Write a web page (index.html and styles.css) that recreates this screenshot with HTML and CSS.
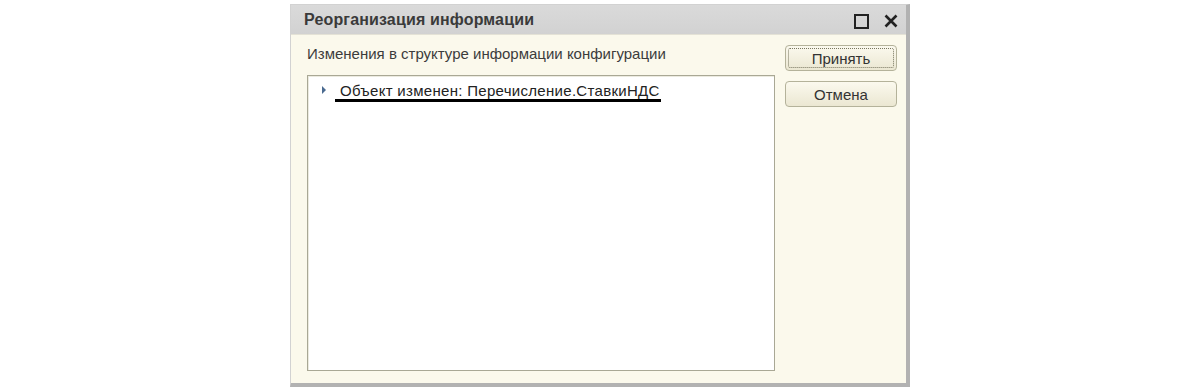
FILE: index.html
```html
<!DOCTYPE html>
<html lang="ru">
<head>
    <meta charset="UTF-8">
    <title>Реорганизация информации</title>
    <link rel="stylesheet" href="styles.css">
</head>
<body>

    <!-- Dialog window -->
    <div class="window">
        <div class="titlebar">
            <span class="title">Реорганизация информации</span>
            <div class="title-buttons">
                <svg width="15" height="15" viewBox="0 0 15 15">
                    <rect x="1" y="1" width="13" height="13" fill="none" stroke="#222" stroke-width="2"/>
                </svg>
                <svg width="14" height="14" viewBox="0 0 14 14">
                    <path d="M1.5 1.5 L12.5 12.5 M12.5 1.5 L1.5 12.5" stroke="#222" stroke-width="2.6"/>
                </svg>
            </div>
        </div>

        <div class="content">
            <div class="left">
                <div class="label">Изменения в структуре информации конфигурации</div>
                <div class="listbox">
                    <div class="row">
                        <span class="arrow"></span>
                        <span class="item">Объект изменен: Перечисление.СтавкиНДС</span>
                    </div>
                </div>
            </div>

            <div class="right">
                <button class="btn default"><span>Принять</span></button>
                <button class="btn"><span>Отмена</span></button>
            </div>
        </div>
    </div>

</body>
</html>
```

FILE: styles.css
```css
/* General */
* {
    margin: 0;
    padding: 0;
    box-sizing: border-box;
}

body {
    background: #fff;
    font-family: "Liberation Sans", Arial, sans-serif;
    color: #333;
}

/* Window */
.window {
    width: 620px;
    height: 383px;
    margin: 4px 0 0 290px;
    background: #fbf9ec;
    border-top: 1px solid #d2d2d2;
    border-left: 1px solid #d2d2d2;
    border-right: 4px solid #b2b2b2;
    border-bottom: 4px solid #b2b2b2;
    display: flex;
    flex-direction: column;
}

.titlebar {
    height: 30px;
    background: linear-gradient(#dadada, #d2d2d2);
    display: flex;
    align-items: center;
    justify-content: space-between;
    padding: 0 8px 0 13px;
    border-bottom: 1px solid #e4e2d6;
}

.title {
    font-size: 16px;
    font-weight: bold;
    color: #3a3a3a;
    letter-spacing: 0.15px;
}

.title-buttons {
    display: flex;
    align-items: center;
    gap: 15px;
    padding-top: 3px;
}

/* Content */
.content {
    flex: 1;
    display: flex;
    padding: 10px 9px 12px 16px;
    gap: 10px;
}

.left {
    flex: 1;
    display: flex;
    flex-direction: column;
}

.label {
    font-size: 15px;
    height: 18px;
    line-height: 18px;
    margin-bottom: 12px;
    color: #3c3c3c;
}

.listbox {
    flex: 1;
    background: #fff;
    border: 1px solid #a9a895;
    box-shadow: inset 1px 1px 0 #ecebe0;
    padding: 4px 0 0 14px;
}

.row {
    display: flex;
    align-items: center;
    height: 20px;
}

.arrow {
    width: 0;
    height: 0;
    border-top: 4px solid transparent;
    border-bottom: 4px solid transparent;
    border-left: 4px solid #4a6a90;
    margin-right: 14px;
}

.item {
    font-size: 15px;
    color: #222;
    letter-spacing: 0.3px;
    position: relative;
}

/* annotation underline */
.item::after {
    content: "";
    position: absolute;
    left: -5px;
    right: -1px;
    bottom: -3px;
    height: 3px;
    background: #000;
}

/* Buttons */
.right {
    width: 112px;
    display: flex;
    flex-direction: column;
    gap: 10px;
}

.btn {
    height: 26px;
    border: 1px solid #b4b29a;
    border-radius: 4px;
    background: linear-gradient(#fbf9ee, #ebe7d2);
    font-family: "Liberation Sans", Arial, sans-serif;
    font-size: 15px;
    color: #333;
    padding: 2px;
}

.btn span {
    display: flex;
    align-items: center;
    justify-content: center;
    height: 100%;
    border: 1px dotted transparent;
    border-radius: 2px;
}

.btn.default span {
    border-color: #77755f;
}
```
